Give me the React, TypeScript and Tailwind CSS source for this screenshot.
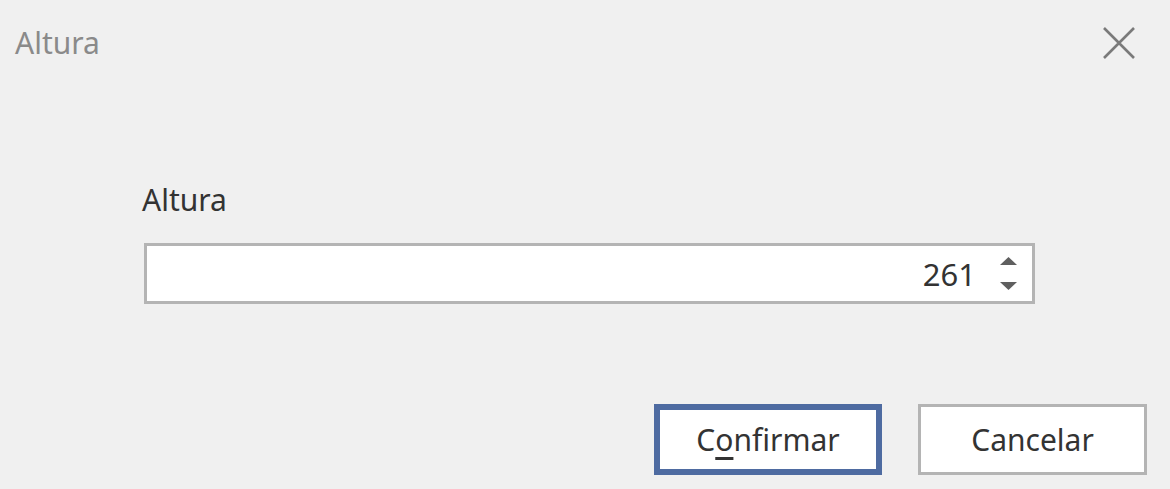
const font = "font-['Noto_Sans','Liberation_Sans',sans-serif]";

export default function App() {
  return (
    <div className={`w-[1170px] h-[489px] bg-[#f0f0f0] flex flex-col ${font}`}>
      {/* title bar */}
      <div className="h-[86px] flex items-center justify-between pl-[15px] pr-[34px]">
        <span className="text-[30px] leading-[40px] text-[#8a8a8a]">Altura</span>
        <svg width="34" height="32" viewBox="0 0 34 32">
          <path d="M2 1 L32 31 M32 1 L2 31" stroke="#7a7a7a" strokeWidth="2.6" fill="none" />
        </svg>
      </div>

      {/* form */}
      <div className="pl-[142px] pt-[94px] flex flex-col">
        <label className="text-[30px] leading-[40px] text-[#333333]">Altura</label>
        <div className="mt-[23px] ml-[2px] w-[891px] h-[61px] bg-white border-[3px] border-[#b4b4b4] flex items-center justify-end">
          <span className="text-[31px] leading-[40px] text-[#333333] mr-[24px]">261</span>
          <div className="flex flex-col gap-[17px] mr-[15px]">
            <svg width="17" height="8" viewBox="0 0 17 8">
              <path d="M8.5 0 L17 8 L0 8 Z" fill="#5f5f5f" />
            </svg>
            <svg width="17" height="8" viewBox="0 0 17 8">
              <path d="M0 0 L17 0 L8.5 8 Z" fill="#5f5f5f" />
            </svg>
          </div>
        </div>
      </div>

      {/* buttons */}
      <div className="mt-auto mb-[14px] mr-[23px] flex justify-end gap-[36px]">
        <button className="w-[228px] h-[71px] bg-white border-[6px] border-[#4e6ba1] text-[30px] text-[#333333] flex items-center justify-center">
          <span>
            C<span className="underline decoration-[3px] underline-offset-[6px]">o</span>nfirmar
          </span>
        </button>
        <button className="w-[229px] h-[71px] bg-white border-[3px] border-[#b4b4b4] text-[30px] text-[#333333] flex items-center justify-center">
          Cancelar
        </button>
      </div>
    </div>
  );
}
